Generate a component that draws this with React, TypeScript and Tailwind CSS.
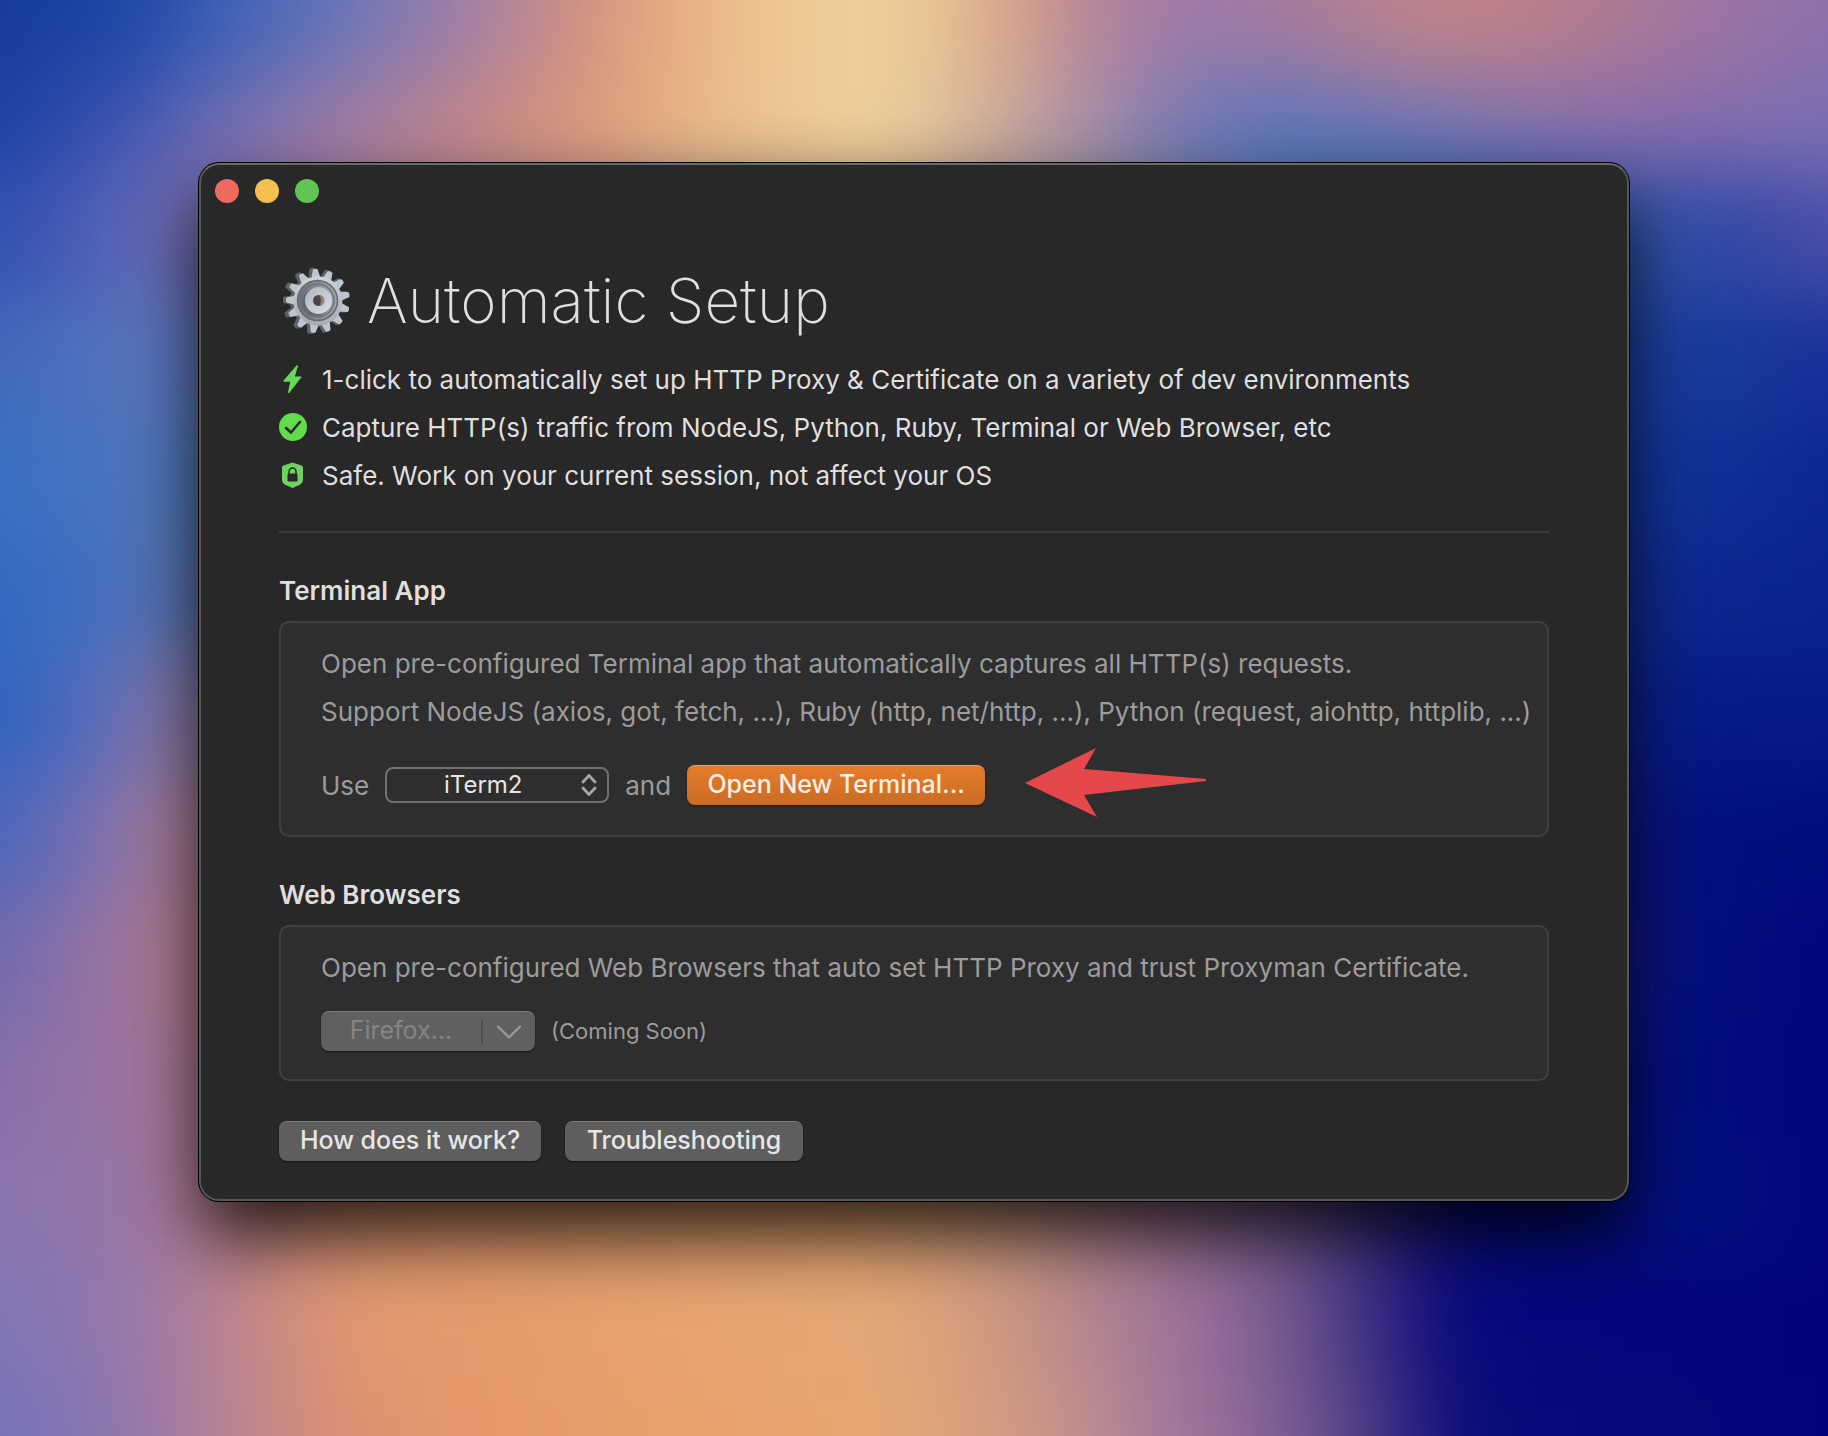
import { ChevronDown } from "lucide-react";

const wallpaperRows = [
    "flex-1 bg-[linear-gradient(90deg,#173c9e_5%,#1d45a6_11%,#3d61b7_16%,#6a77b8_22%,#a37fa7_28%,#d4917f_34%,#e2a27e_36%,#edc28e_42%,#efd09a_47%,#ecca97_50%,#dbab8b_54%,#c7918f_57%,#ac809f_60%,#9d7aaa_64%,#a67b9b_69%,#bc838c_74%,#c18386_78%,#b07b91_84%,#9d75a3_89%,#8d71ac_95%)]",
    "flex-1 bg-[linear-gradient(90deg,#193ea3_5%,#3250ae_11%,#5e6bb3_16%,#917aab_22%,#b88291_28%,#db987a_34%,#e6ae82_38%,#edc490_42%,#efd09b_47%,#eacb99_50%,#d5ad93_54%,#b58fa2_58%,#907eac_62%,#7779b4_65%,#7a78b2_69%,#8e78a8_74%,#9a77a2_79%,#9870a2_84%,#8f6fa9_89%,#826eae_95%)]",
    "flex-1 bg-[linear-gradient(90deg,#1e43a8_5%,#4658b2_11%,#7e70b0_16%,#a97c9c_22%,#c78784_28%,#dc9d7a_34%,#e8b887_39%,#efcf9b_47%,#e5c79b_50%,#c4a99e_54%,#9d8ba9_59%,#6f78b6_63%,#4e73ba_68%,#5572b7_74%,#6870b4_79%,#7b6cb0_84%,#7868ae_89%,#756fb5_95%)]",
    "flex-2 bg-[linear-gradient(90deg,#3152b2_5%,#4658b4_8%,#5968b6_11%,#6d6ab0_14%,#a07a98_25%,#c9a080_50%,#4a68a8_70%,#2f50a8_87%,#3245a4_91%,#4a4fa7_95%)]",
    "flex-2 bg-[linear-gradient(90deg,#4268bb_5%,#4a70bd_8%,#5674ba_11%,#5a72b8_14%,#808098_50%,#173c9e_87%,#17389b_91%,#17309b_95%)]",
    "flex-2 bg-[linear-gradient(90deg,#3a72c3_5%,#4272c2_8%,#4c74bb_11%,#5076b4_14%,#606890_50%,#103298_87%,#0e3096_90%,#0b2790_95%)]",
    "flex-2 bg-[linear-gradient(90deg,#3169c1_5%,#3b6ec3_8%,#4a6fb9_11%,#5c72ac_14%,#606090_50%,#0b278f_88%,#0a248d_95%)]",
    "flex-2 bg-[linear-gradient(90deg,#3162bf_5%,#4669bd_8%,#6b6fb3_11%,#8c78a0_14%,#606090_50%,#051a87_88%,#061a86_95%)]",
    "flex-2 bg-[linear-gradient(90deg,#4b66ba_5%,#6a6db4_8%,#8b73a8_11%,#ac7c90_14%,#60507c_50%,#04107f_88%,#020c7d_95%)]",
    "flex-2 bg-[linear-gradient(90deg,#6f6aae_5%,#8a70a9_8%,#9b749d_11%,#b47c8a_14%,#80607c_50%,#040f7e_88%,#02067c_95%)]",
    "flex-2 bg-[linear-gradient(90deg,#866ea9_5%,#9273a8_8%,#99739f_11%,#ac7a94_14%,#c08c6c_50%,#604c80_70%,#03107e_85%,#02067c_95%)]",
    "flex-2 bg-[linear-gradient(90deg,#8c74ae_5%,#8f75ad_8%,#9675a4_11%,#b07c94_15%,#d28c78_20%,#dd966e_25%,#e4a372_48%,#cf9a7c_54%,#a87a90_61%,#775b8f_68%,#2a1f7e_74%,#030a7c_77%,#03107e_89%,#02057c_95%)]",
    "flex-2 bg-[linear-gradient(90deg,#7f76b3_5%,#8a75b2_8%,#9678ab_11%,#b27f97_15%,#cf8c7e_19%,#e09870_22%,#e59b6b_29%,#e6a370_39%,#e4a775_48%,#d8a07c_52%,#be8c88_57%,#a87a96_61%,#986f99_64%,#775b8f_68%,#503e85_71%,#2a1f7e_74%,#06087c_77%,#02047c_95%)]",
    "flex-1 bg-[linear-gradient(90deg,#7674ba_5%,#8275b4_8%,#9076ae_11%,#b08099_15%,#cc8a84_19%,#dd9270_22%,#e6996a_29%,#e8a06c_39%,#e6a772_48%,#dba27b_52%,#c8938a_57%,#ae8199_61%,#9b739c_64%,#7f6094_68%,#5d4988_71%,#35287f_74%,#0a0c7b_77%,#02047b_95%)]",
];

const trafficLights = [
    { label: "Close", color: "bg-[#ee6a5f]" },
    { label: "Minimize", color: "bg-[#f5bf4f]" },
    { label: "Zoom", color: "bg-[#61c454]" },
];

const teeth = Array.from({ length: 13 }, (_, i) => (i * 360) / 13);

const GearIcon = () => (
    <svg className="size-[68px] shrink-0" viewBox="0 0 68 68" aria-hidden="true">
        <defs>
            <linearGradient id="gear-face" x1="0" y1="0" x2="0" y2="1">
                <stop offset="0" stopColor="#c9d3dc" />
                <stop offset="1" stopColor="#a9abb3" />
            </linearGradient>
            <linearGradient id="gear-dish" x1="0" y1="0" x2="1" y2="0">
                <stop offset="0" stopColor="#6d7178" />
                <stop offset="1" stopColor="#a0a4ac" />
            </linearGradient>
            <linearGradient id="gear-hub" x1="0" y1="0" x2="1" y2="1">
                <stop offset="0" stopColor="#b5bbc5" />
                <stop offset="1" stopColor="#d5d6e0" />
            </linearGradient>
        </defs>
        <g fill="#5f6163">
            {teeth.map((angle) => (
                <path key={angle} d="M27 13 29 1.500Q32 0 35 1.500L37 13Z" transform={`rotate(${angle - 5} 32 34)`} />
            ))}
            <circle cx="32" cy="34" r="25" />
        </g>
        <g fill="#bfc5cd">
            {teeth.map((angle) => (
                <path key={angle} d="M30 13 32.500 2.500Q35 1 37.500 2.500L40 13Z" transform={`rotate(${angle - 5} 35 34)`} />
            ))}
        </g>
        <circle cx="35" cy="34" r="24.500" fill="url(#gear-face)" />
        <circle cx="34.500" cy="33.500" r="20" fill="url(#gear-dish)" stroke="#666a70" strokeWidth="1.500" />
        <circle cx="34.500" cy="33.500" r="16.500" fill="none" stroke="#666a70" strokeWidth="1.200" />
        <circle cx="33.500" cy="35" r="14" fill="#62666d" />
        <circle cx="35.500" cy="33.500" r="9.500" fill="#4a4645" stroke="url(#gear-hub)" strokeWidth="8" />
        <path d="M36.500 28.500a5 5 0 0 1 0 10c2-3 2-7 0-10Z" fill="#8b8580" />
    </svg>
);

const BoltIcon = () => (
    <svg className="h-7 w-7" viewBox="0 0 28 28" aria-hidden="true">
        <path
            d="M17.600.400 4.500 15.600c-.4.500-.1 1.200.6 1.200h6.200L9 27.200c-.3 1 .7 1.300 1.300.600L22.300 12.600c.4-.5.1-1.200-.6-1.200h-5.800L18.900 1c.3-1-.7-1.300-1.300-.6Z"
            fill="#65d95a"
        />
    </svg>
);

const CheckIcon = () => (
    <svg className="h-7 w-7" viewBox="0 0 28 28" aria-hidden="true">
        <circle cx="14" cy="14" r="14" fill="#62dc4c" />
        <path d="m7 15 5 4.500 9-10.500" fill="none" stroke="#282828" strokeWidth="2.600" strokeLinecap="round" strokeLinejoin="round" />
    </svg>
);

const ShieldIcon = () => (
    <svg className="h-7 w-7" viewBox="0 0 28 28" aria-hidden="true">
        <path
            d="M13.500 1.500 4.500 4.500Q3 5 3 6.500V18c0 3 1 4.500 3.500 6l7 3 7-3c2.500-1.500 3.500-3 3.500-6V6.500Q24 5 22.500 4.500Z"
            fill="#6cd35f"
        />
        <path d="M10 13V10.500a3.500 3.500 0 0 1 7 0V13" fill="none" stroke="#282828" strokeWidth="1.500" />
        <rect x="8.500" y="12.500" width="10" height="8" rx="1.200" fill="#282828" />
    </svg>
);

const features = [
    { icon: <BoltIcon />, text: "1-click to automatically set up HTTP Proxy & Certificate on a variety of dev environments" },
    { icon: <CheckIcon />, text: "Capture HTTP(s) traffic from NodeJS, Python, Ruby, Terminal or Web Browser, etc" },
    { icon: <ShieldIcon />, text: "Safe. Work on your current session, not affect your OS" },
];

const greyButton =
    "h-10 rounded-lg border-t border-[#7c7c7c] bg-[#5e5e5e] pb-1 text-[25px] leading-9 font-medium whitespace-nowrap text-[#e6e6e6] shadow-[0_1px_2px_rgba(0,0,0,0.5)]";

export default function App() {
    return (
        <div className="relative isolate min-h-screen overflow-hidden bg-[#02047c] px-[199px] pt-[163px] font-['Inter',sans-serif] text-[26px] text-[#dfdfdf]">
            <div className="absolute -inset-[100px] -z-10 flex flex-col blur-[36px]" aria-hidden="true">
                {wallpaperRows.map((row) => (
                    <div key={row} className={`first:pt-[100px] last:pb-[100px] ${row}`} />
                ))}
            </div>

            <main className="rounded-[20px] border-2 border-[#565656] border-t-[#6a6a6a] bg-[#282828] px-[78px] pt-3.5 pb-[38px] shadow-[0_0_0_1px_#000,0_36px_70px_0_rgba(0,0,0,0.8)]">
                <div className="-ml-16 flex gap-4">
                    {trafficLights.map(({ label, color }) => (
                        <button key={label} type="button" aria-label={label} className={`size-6 rounded-full ${color}`} />
                    ))}
                </div>

                <h1 className="mt-[58px] flex h-20 items-center gap-4 pl-1 text-[62px] leading-20 font-extralight">
                    <GearIcon />
                    Automatic Setup
                </h1>

                <ul className="mt-3.5">
                    {features.map(({ icon, text }) => (
                        <li key={text} className="flex h-12 items-center gap-[15px] whitespace-nowrap">
                            {icon}
                            {text}
                        </li>
                    ))}
                </ul>

                <hr className="mt-8 border-t-2 border-[#3c3c3c]" />

                <section className="mt-10">
                    <h2 className="leading-9 font-semibold">Terminal App</h2>
                    <div className="mt-3 rounded-[10px] border-2 border-[#404040] bg-[#2e2e2e] px-10 pt-[17px] pb-[30px] text-[#9c9c9c]">
                        <p className="leading-12 whitespace-nowrap">
                            Open pre-configured Terminal app that automatically captures all HTTP(s) requests.
                            <br />
                            Support NodeJS (axios, got, fetch, ...), Ruby (http, net/http, ...), Python (request, aiohttp, httplib, ...)
                        </p>
                        <div className="mt-[29px] flex h-10 items-center gap-4">
                            <label htmlFor="terminal">Use</label>
                            <div className="relative flex">
                                <select
                                    id="terminal"
                                    className="h-9 w-56 appearance-none rounded-lg border-2 border-[#707070] bg-[#2e2e2e] pr-7 text-center text-[24px] leading-8 text-[#e6e6e6]"
                                >
                                    <option>iTerm2</option>
                                </select>
                                <svg
                                    className="pointer-events-none absolute top-[7px] right-3 h-[22px] w-4"
                                    viewBox="0 0 16 22"
                                    fill="none"
                                    stroke="#a5a5a5"
                                    strokeWidth="2.800"
                                    strokeLinecap="round"
                                    strokeLinejoin="round"
                                    aria-hidden="true"
                                >
                                    <path d="M2 8 8 1.500 14 8M2 14 8 20.500 14 14" />
                                </svg>
                            </div>
                            <span>and</span>
                            <button
                                type="button"
                                className="h-10 w-[298px] rounded-lg border-t border-[#f0a060] bg-linear-to-b from-[#e67c2c] to-[#c96c24] pb-1 text-[25px] leading-9 font-medium whitespace-nowrap text-[#fbeee2] shadow-[0_1px_2px_rgba(0,0,0,0.5)]"
                            >
                                Open New Terminal...
                            </button>
                            <svg className="mb-1 ml-6 h-[70px] w-[182px]" viewBox="0 0 182 70" aria-hidden="true">
                                <path d="M0 35 71 0 59 21 181 31V33L59 47 72 69Z" fill="#e5484b" />
                            </svg>
                        </div>
                    </div>
                </section>

                <section className="mt-10">
                    <h2 className="leading-9 font-semibold">Web Browsers</h2>
                    <div className="mt-3 rounded-[10px] border-2 border-[#404040] bg-[#2e2e2e] px-10 pt-[17px] pb-[28px] text-[#9c9c9c]">
                        <p className="leading-12 whitespace-nowrap">
                            Open pre-configured Web Browsers that auto set HTTP Proxy and trust Proxyman Certificate.
                        </p>
                        <div className="mt-[19px] flex items-center gap-4">
                            <button
                                type="button"
                                disabled
                                className="flex h-10 w-[214px] items-center rounded-lg border-t border-[#7c7c7c] bg-[#606060] text-[25px] text-[#858585] shadow-[0_1px_2px_rgba(0,0,0,0.5)]"
                            >
                                <span className="flex-1 pb-1 leading-9">Firefox...</span>
                                <span className="h-6 w-0.5 bg-[#4e4e4e]" />
                                <ChevronDown className="mx-1 size-11 text-[#9a9a9a]" strokeWidth={1.3} />
                            </button>
                            <span className="text-[22px]">(Coming Soon)</span>
                        </div>
                    </div>
                </section>

                <div className="mt-10 flex gap-6">
                    <button type="button" className={`w-[262px] ${greyButton}`}>
                        How does it work?
                    </button>
                    <button type="button" className={`w-[238px] ${greyButton}`}>
                        Troubleshooting
                    </button>
                </div>
            </main>
        </div>
    );
}
